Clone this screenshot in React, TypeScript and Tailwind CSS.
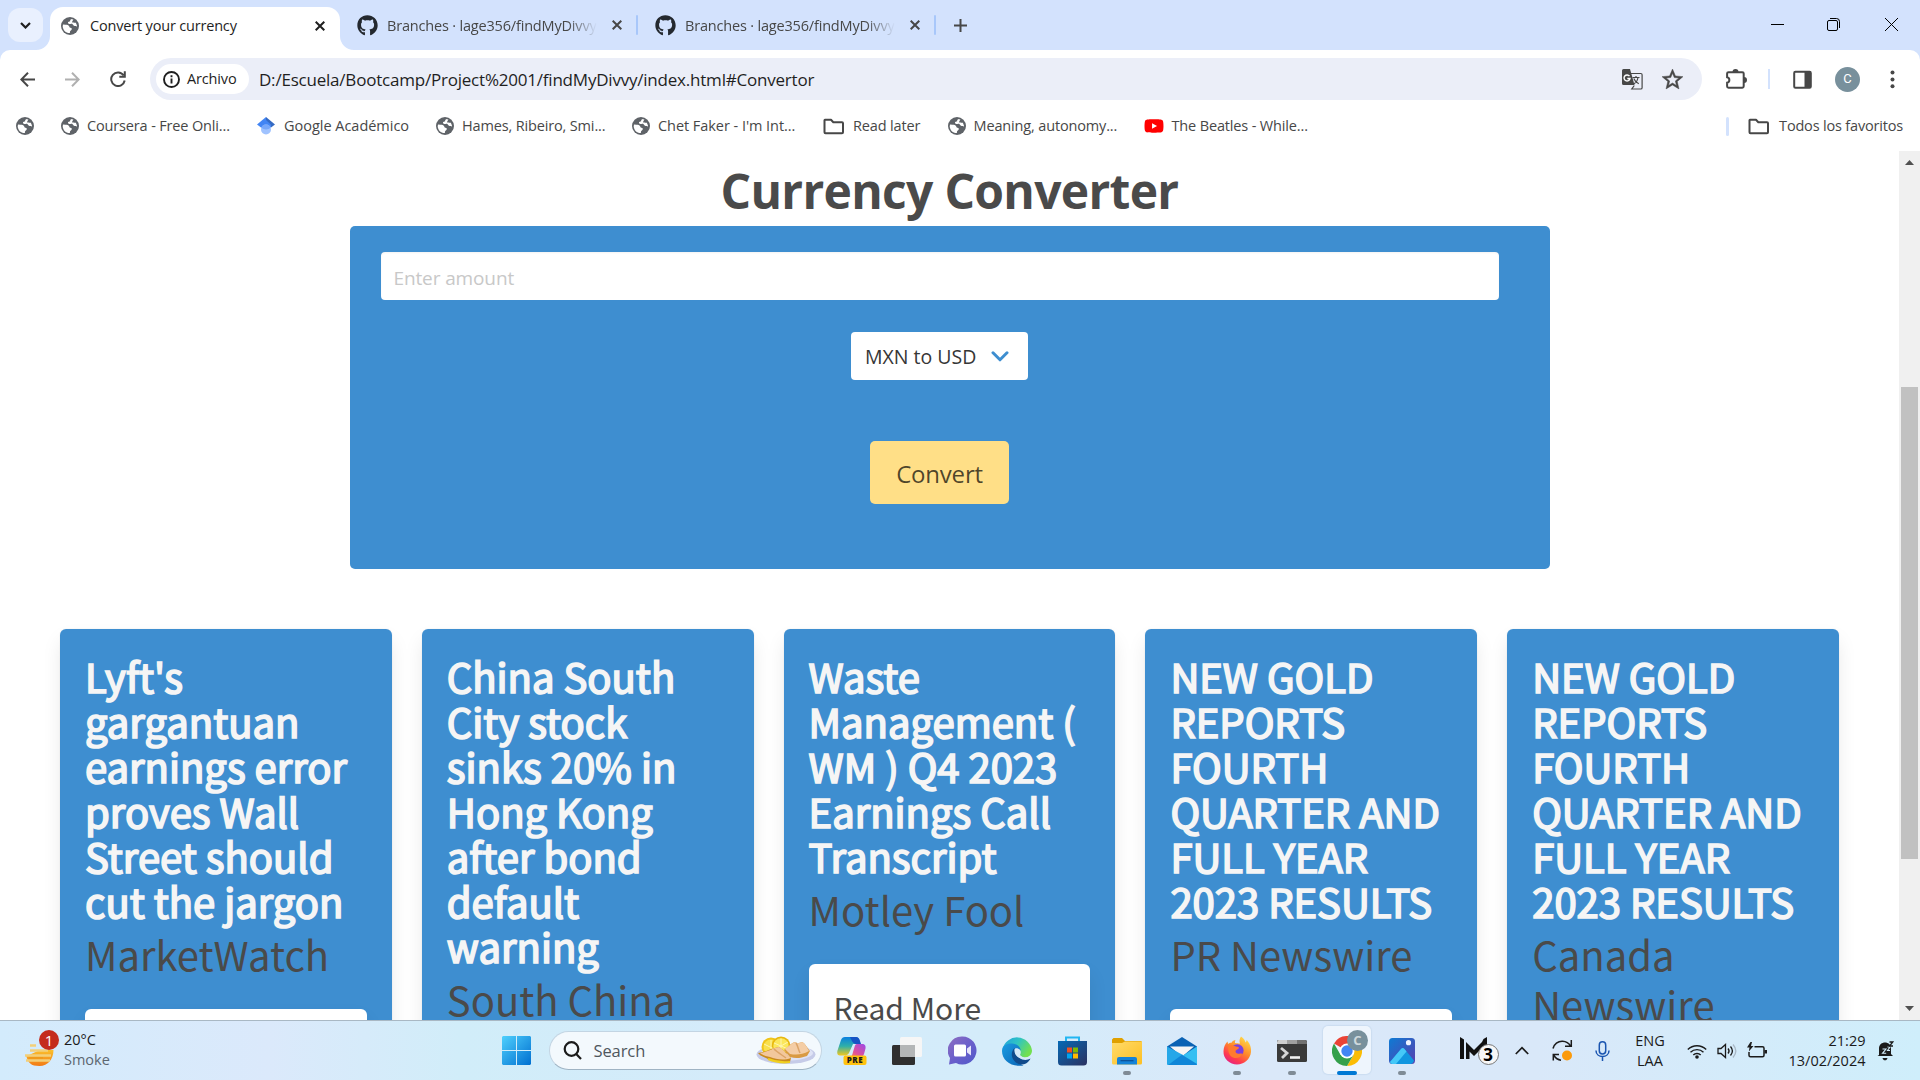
import React from 'react';
import { FaGithub, FaYoutube } from 'react-icons/fa';
import { MdStarOutline } from 'react-icons/md';

function Globe() {
  return (
    <svg className="size-[18px] shrink-0" viewBox="0 0 18 18">
      <circle cx="9" cy="9" r="9" fill="#5f6368" />
      <path
        d="M2 7.6 4.6 7.7c1.6.1 2.9.4 3.4 1.3.4.8.3 1.6 1.4 1.7 1.200 .2 1.600.8 1.300 1.700-.3.900-1.500 1-1.700 2.200l-.1 1.500C5 16.300 2 13.400 1.700 9.500z"
        fill="#fff"
      />
      <path
        d="M11.200 2c-1.700.3-2.200 1-2 1.700.2.700-1.400.700-2 1.400-.6.800.1 1.800 1.200 1.800 1.300 0 1.700-.4 2.600-.2 1.100.3.900 1.600 2 2 .9.400 1.700-.1 2.400.500l.6.600C16.200 6.200 14.200 3 11.200 2z"
        fill="#fff"
      />
      <path d="M11.500 2.200c.8 1 .2 1.900-.3 2.300-.5.500.1 1.200 1 1 1-.2 1.600.6 2.800.2l1.200 2.800.6-1.500-2.300-4z" fill="#5f6368" />
    </svg>
  );
}

function Folder() {
  return (
    <svg className="h-[17px] w-[22px] shrink-0" viewBox="0 0 22 17" fill="none" stroke="#474747" strokeWidth="2" strokeLinejoin="round">
      <path d="M2 1.800h6l2.300 2.400h8.700c.6 0 1 .4 1 1v9c0 .6-.4 1-1 1H2.500c-.6 0-1-.4-1-1V2.300z" />
    </svg>
  );
}

function Scholar() {
  return (
    <svg className="size-[18px] shrink-0" viewBox="0 0 18 18">
      <path d="M9 0 0 7.500l4 3.100L9 6z" fill="#4285f4" />
      <path d="m9 0 9 7.500-4 3.100L9 6z" fill="#356ac3" />
      <path d="M4 7.800 9 3l5 4.800v2L9 14l-5-4z" fill="#4285f4" />
      <circle cx="9" cy="12.500" r="5" fill="#a0c3ff" />
      <path d="M4.300 10.800a5 5 0 0 1 9.400 0A7 7 0 0 1 9 12.600a7 7 0 0 1-4.700-1.800z" fill="#76a7fa" />
    </svg>
  );
}

function Cross({ color }: { color: string }) {
  return (
    <svg className="size-[10px] shrink-0" viewBox="0 0 10 10" stroke={color} strokeWidth="2">
      <path d="m.7.7 8.600 8.600M9.300.7.7 9.300" />
    </svg>
  );
}

function BranchTab() {
  return (
    <div className="flex h-full w-[298px] items-center">
      <FaGithub className="ml-[17px] size-[21px] shrink-0 text-[#24292f]" />
      <span className="mt-px ml-[9px] w-[210px] overflow-hidden whitespace-nowrap text-[#474747] [mask-image:linear-gradient(to_right,black_86%,transparent)]">
        Branches · lage356/findMyDivvy
      </span>
      <span className="ml-[15px] flex">
        <Cross color="#474747" />
      </span>
      <span className="ml-auto h-5 w-[2px] rounded-full bg-[#a8c7fa]" />
    </div>
  );
}

function TabStrip() {
  return (
    <div className="flex h-[50px] shrink-0 items-stretch bg-[#d3e2fd] text-[14.5px] tracking-[-0.18px]">
      <div className="mt-2 ml-2 flex h-[34px] w-[35px] items-center justify-center rounded-[12px] bg-[#e9f0fe]">
        <svg className="h-[7px] w-[11px]" viewBox="0 0 11 7" fill="none" stroke="#1f1f1f" strokeWidth="2.200">
          <path d="m1 1 4.500 4.500L10 1" />
        </svg>
      </div>
      <div className="relative mt-[7px] ml-[7px] flex h-[43px] w-[290px] items-center rounded-t-[13px] bg-white pb-[6px] text-[#1f1f1f]">
        <svg className="absolute bottom-0 -left-[14px] size-[14px]" viewBox="0 0 14 14">
          <path d="M14 0v14H0A14 14 0 0 0 14 0z" fill="#fff" />
        </svg>
        <svg className="absolute -right-[14px] bottom-0 size-[14px]" viewBox="0 0 14 14">
          <path d="M0 0v14h14A14 14 0 0 1 0 0z" fill="#fff" />
        </svg>
        <span className="ml-[11px] flex">
          <Globe />
        </span>
        <span className="mt-px ml-[11px] w-[225px]">Convert your currency</span>
        <Cross color="#1f1f1f" />
      </div>
      <BranchTab />
      <BranchTab />
      <svg className="mt-[19px] ml-[18px] size-[13px]" viewBox="0 0 13 13" stroke="#474747" strokeWidth="2">
        <path d="M6.500 0v13M0 6.500h13" />
      </svg>
      <div className="ml-auto flex h-[49px] items-center text-black">
        <svg className="mr-[43px] h-[13px] w-[13px]" viewBox="0 0 13 13" stroke="#000" strokeWidth="1">
          <path d="M0 6.500h13" />
        </svg>
        <svg className="mr-[45px] size-[13px]" viewBox="0 0 13 13" fill="none" stroke="#000" strokeWidth="1">
          <rect x=".5" y="2.500" width="10" height="10" rx="1.500" />
          <path d="M3 .5h6.500a3 3 0 0 1 3 3V10" />
        </svg>
        <svg className="mr-[22px] size-[13px]" viewBox="0 0 13 13" stroke="#000" strokeWidth="1">
          <path d="m0 0 13 13M13 0 0 13" />
        </svg>
      </div>
    </div>
  );
}

function Toolbar() {
  return (
    <div className="flex h-[58px] shrink-0 items-center bg-[#d3e2fd]">
      <div className="flex h-full w-full items-center rounded-t-[10px] bg-white">
        <svg className="ml-[20px] size-[15px]" viewBox="0 0 15 15" fill="none" stroke="#474747" strokeWidth="2">
          <path d="M15 7.500H1.500M8 .8 1.300 7.500 8 14.200" />
        </svg>
        <svg className="ml-[30px] size-[15px]" viewBox="0 0 15 15" fill="none" stroke="#b0b0b0" strokeWidth="2">
          <path d="M0 7.500h13.500M7 .8l6.700 6.700L7 14.200" />
        </svg>
        <svg className="ml-[29.500px] size-[16px]" viewBox="0 0 16 16" fill="none" stroke="#474747" strokeWidth="2">
          <path d="M13.600 4.300A6.800 6.800 0 1 0 14.700 9.500M14.800.3v5.500H9.300" />
        </svg>
        <div className="ml-[24.500px] flex h-[42px] w-[1552px] items-center rounded-full bg-[#ebeef8]">
          <div className="ml-[6px] flex h-[30px] w-[93px] items-center rounded-full bg-white">
            <svg className="ml-[7px] size-[17px]" viewBox="0 0 17 17" fill="none" stroke="#1f1f1f" strokeWidth="1.900">
              <circle cx="8.500" cy="8.500" r="7.500" />
              <path d="M8.500 7.500v5M8.500 4.300v1.900" />
            </svg>
            <span className="ml-[7px] text-[14.5px] font-medium tracking-[-0.15px] text-[#1f1f1f]">Archivo</span>
          </div>
          <span className="mt-px ml-[10px] text-[17px] tracking-[-0.21px] text-[#1f1f1f]">
            D:/Escuela/Bootcamp/Project%2001/findMyDivvy/index.html#Convertor
          </span>
          <svg className="ml-auto size-[21px]" viewBox="0 0 21 21">
            <path d="M1.500 0H8l4.500 16H1.500A1.500 1.500 0 0 1 0 14.500v-13A1.500 1.500 0 0 1 1.500 0z" fill="#474747" />
            <path d="M8.800 4.500h10a1.300 1.300 0 0 1 1.300 1.300v12.900a1.300 1.300 0 0 1-1.300 1.300H9.800l2.500-3.500" fill="none" stroke="#474747" strokeWidth="1.200" />
            <path d="M7.500 7.200A3 3 0 1 0 8 9.500H5.300" fill="none" stroke="#fff" strokeWidth="1.400" />
            <path d="M10.500 8.500h7M14 7v1.500M16 8.500c-.5 3-2.500 5.500-4.500 6.500M11.800 9.500c1 2.500 3 4.500 5 5.300" fill="none" stroke="#474747" strokeWidth="1.200" />
          </svg>
          <MdStarOutline className="mr-[17px] ml-[17px] size-[25px] stroke-[#474747] [stroke-width:0.5] text-[#474747]" />
        </div>
        <svg className="ml-[24px] size-[21px] shrink-0" viewBox="0 0 21 21">
          <path
            d="M2.500 3.200h13.800c.8 0 1.400.6 1.400 1.400v12.700c0 .8-.6 1.400-1.400 1.400H2.500c-.8 0-1.400-.6-1.400-1.400v-3.600c3-.5 3-5 0-5.500V4.600c0-.8.6-1.400 1.400-1.400z"
            fill="none"
            stroke="#474747"
            strokeWidth="2"
          />
          <path d="M6.500 3a3 3 0 0 1 6 0zM18 8a3 3 0 0 1 0 6z" fill="#474747" />
        </svg>
        <span className="ml-[21px] h-5 w-[2px] shrink-0 bg-[#d3e2fd]" />
        <svg className="ml-[23px] size-[19px] shrink-0" viewBox="0 0 19 19">
          <rect x="1.200" y="1.700" width="16.600" height="16" rx="1.200" fill="none" stroke="#474747" strokeWidth="2" />
          <path d="M11.500 1.500H18v16.500h-6.500z" fill="#474747" />
        </svg>
        <span className="ml-[23px] flex size-[25px] shrink-0 items-center justify-center rounded-full bg-[#78909c] font-['Roboto',sans-serif] text-[13px] text-white">
          C
        </span>
        <svg className="ml-[30px] h-[19px] w-[5px] shrink-0" viewBox="0 0 5 19" fill="#474747">
          <circle cx="2.500" cy="2.500" r="2" />
          <circle cx="2.500" cy="9.500" r="2" />
          <circle cx="2.500" cy="16.300" r="2" />
        </svg>
      </div>
    </div>
  );
}

function Bookmarks() {
  return (
    <div className="flex h-[43px] shrink-0 items-center bg-white pb-[7px] pl-4 text-[14.5px] tracking-[-0.15px] whitespace-nowrap text-[#474747]">
      <div className="w-[45px]">
        <Globe />
      </div>
      <div className="flex w-[196px] items-center gap-[8px]">
        <Globe />
        Coursera - Free Onli...
      </div>
      <div className="flex w-[179px] items-center gap-[9px] tracking-[-0.02px]">
        <Scholar />
        Google Académico
      </div>
      <div className="flex w-[196px] items-center gap-[8px]">
        <Globe />
        Hames, Ribeiro, Smi...
      </div>
      <div className="flex w-[191px] items-center gap-[8px] tracking-[-0.05px]">
        <Globe />
        Chet Faker - I'm Int...
      </div>
      <div className="flex w-[124.500px] items-center gap-[8px]">
        <Folder />
        Read later
      </div>
      <div className="flex w-[196px] items-center gap-[8px]">
        <Globe />
        Meaning, autonomy...
      </div>
      <div className="flex items-center gap-[8px]">
        <span className="relative flex">
          <span className="absolute inset-[6px] bg-white" />
          <FaYoutube className="relative size-[20px] text-[#f00]" />
        </span>
        The Beatles - While...
      </div>
      <span className="ml-auto h-[19px] w-[3px] rounded-full bg-[#d3e2fd]" />
      <div className="mr-[17px] ml-[19px] flex items-center gap-[9px] tracking-[-0.18px]">
        <Folder />
        Todos los favoritos
      </div>
    </div>
  );
}

type Article = { title: string; source: string };

const articles: Article[] = [
  { title: "Lyft's gargantuan earnings error proves Wall Street should cut the jargon", source: 'MarketWatch' },
  { title: 'China South City stock sinks 20% in Hong Kong after bond default warning', source: 'South China' },
  { title: 'Waste Management ( WM ) Q4 2023 Earnings Call Transcript', source: 'Motley Fool' },
  { title: 'NEW GOLD REPORTS FOURTH QUARTER AND FULL YEAR 2023 RESULTS', source: 'PR Newswire' },
  { title: 'NEW GOLD REPORTS FOURTH QUARTER AND FULL YEAR 2023 RESULTS', source: 'Canada Newswire' },
];

function Card({ title, source }: Article) {
  return (
    <article className="rounded-[6px] bg-[#3e8ed0] p-[25px] font-['Noto_Sans_CJK_SC',sans-serif] shadow-[0_10px_20px_-2.5px_rgba(10,10,10,0.1),0_0_0_1px_rgba(10,10,10,0.02)]">
      <h2 className="text-[40px] leading-[45px] text-[#f5f5f5] [-webkit-text-stroke:1.7px_#f5f5f5]">{title}</h2>
      <p className="mt-[5px] text-[40px] leading-[50px] text-[#4a4a4a]">{source}</p>
      <div className="mt-[30px] rounded-[6px] bg-white p-[25px] text-[30px] leading-[36px] text-[#4a4a4a] shadow-[0_10px_20px_-2.5px_rgba(10,10,10,0.1)]">
        Read More
      </div>
    </article>
  );
}

function Page() {
  return (
    <div className="flex min-h-0 flex-1">
      <main className="min-w-0 flex-1 overflow-hidden bg-white">
        <h1 className="mt-[10px] mb-[5px] text-center text-[48px] leading-[60px] font-bold tracking-[-0.7px] text-[#4a4a4a]">
          Currency Converter
        </h1>
        <section className="ml-[350px] flex h-[343px] w-[1200px] flex-col items-center rounded-[5px] bg-[#3e8ed0] pt-[26px] pr-[52px] pl-[31px]">
          <div className="flex h-12 w-[1118px] items-center rounded-[4px] bg-white pt-[4px] pl-[13px] text-[19px] tracking-[-0.12px] text-[#c8c8c8] shadow-[inset_0_1px_2px_rgba(10,10,10,0.05)]">
            Enter amount
          </div>
          <div className="mt-8 flex h-12 w-[177px] items-center rounded-[4px] bg-white pt-[2px] pl-[14px] text-[19.5px] text-[#363636]">
            MXN to USD
            <svg className="-mt-[2px] ml-[15px] h-[11px] w-[18px]" viewBox="0 0 18 11" fill="none" stroke="#3e8ed0" strokeWidth="3" strokeLinecap="round" strokeLinejoin="round">
              <path d="m2 1.800 7 7 7-7" />
            </svg>
          </div>
          <div className="mt-[61px] flex h-[63px] w-[139px] items-center justify-center rounded-[5px] bg-[#ffdf87] pt-[2px] text-[24px] tracking-[-0.2px] text-black/70">
            Convert
          </div>
        </section>
        <section className="mt-[60px] ml-[60px] grid w-[1779px] grid-cols-5 gap-[30px]">
          {articles.map((a) => (
            <Card key={a.source} {...a} />
          ))}
        </section>
      </main>
      <div className="flex w-[21px] shrink-0 flex-col items-center bg-[#f0f0f0]">
        <svg className="mt-[9px] h-[5px] w-[9px]" viewBox="0 0 9 5" fill="#505050">
          <path d="M4.500 0 9 5H0z" />
        </svg>
        <div className="mt-[222px] h-[472px] w-[17px] bg-[#c1c1c1]" />
        <svg className="mt-auto mb-[9px] h-[5px] w-[9px]" viewBox="0 0 9 5" fill="#505050">
          <path d="M4.500 5 9 0H0z" />
        </svg>
      </div>
    </div>
  );
}

function AppCell({ children, running, active }: { children: React.ReactNode; running?: boolean; active?: boolean }) {
  return (
    <div className="relative flex h-[59px] w-[55px] shrink-0 items-center justify-center">
      {active && <span className="absolute top-[5px] left-[3.500px] size-12 rounded-[5px] bg-[#eef5fd] shadow-[0_0_1px_1px_rgba(150,180,210,0.2)]" />}
      <span className="relative flex">{children}</span>
      {running && <span className="absolute bottom-[5px] left-[23.500px] h-[4px] w-[8px] rounded-full bg-[#7f8b96]" />}
      {active && <span className="absolute bottom-[5px] left-[17.500px] h-[4px] w-[20px] rounded-full bg-[#0078d4]" />}
    </div>
  );
}

function WindowsLogo() {
  return (
    <svg className="size-[29px]" viewBox="0 0 29 29">
      <defs>
        <linearGradient id="win" x1="0" y1="0" x2="1" y2="1">
          <stop offset="0" stopColor="#4fd0fd" />
          <stop offset="1" stopColor="#006fd0" />
        </linearGradient>
      </defs>
      <path d="M1 0h13v14H0V1zM15 0h13l1 1v13H15zM0 15h14v14H1l-1-1zM15 15h14v13l-1 1H15z" fill="url(#win)" />
    </svg>
  );
}

function FoodPlate() {
  return (
    <svg className="h-[30px] w-[60px]" viewBox="0 0 60 30">
      <ellipse cx="30" cy="18.500" rx="29.500" ry="9.500" fill="#c6cbe8" />
      <ellipse cx="31" cy="17" rx="26" ry="7.500" fill="#dfe3f5" />
      <circle cx="15" cy="11" r="9.500" fill="#f0c419" />
      <circle cx="15" cy="11" r="7.500" fill="#f9e04b" />
      <circle cx="25" cy="10" r="9.500" fill="#e8b810" />
      <circle cx="25" cy="10" r="7.700" fill="#fbe75c" />
      <path d="M25 2.500v15M18 7l14 6M32 6l-14 8M15 4v12M8 8l12 6" stroke="#fff6b8" strokeWidth=".9" />
      <path d="M2 17c8-1 14-5 21-6 5 3 8 8 12 11l-1 4c-8 2-16-1-22-3-4-2-8-3-10-6z" fill="#c98a1e" />
      <path d="M4 17c8-1 13-5 19-6 5 3 8 8 12 11-8 3-15 1-21-1-4-1-8-2-10-4z" fill="#f2c79c" />
      <path d="M28 14c4-3 7-7 11-8 3 2 4 1 7 0 4 2 5 6 8 9l-3 5c-6 2-11 3-17 1z" fill="#d99a42" />
      <path d="M29 13c4-3 7-6 10-7 3 2 4 1 7 0 4 2 5 6 7 9-7 4-13 4-19 3z" fill="#f4cda5" />
      <path d="M40 7c2 3 2 6 4 10M18 13c3 3 8 6 12 9" stroke="#dca468" strokeWidth="1.500" fill="none" />
      <path d="M12 23c7 3 14 4 22 3" stroke="#f0d020" strokeWidth="2.200" fill="none" />
    </svg>
  );
}

function Copilot() {
  return (
    <svg className="h-[29px] w-[30px]" viewBox="0 0 30 29">
      <defs>
        <linearGradient id="cp1" x1="0" y1="0" x2="0" y2="1">
          <stop offset="0" stopColor="#0a7fe0" />
          <stop offset=".5" stopColor="#2fb0a8" />
          <stop offset="1" stopColor="#f5c81c" />
        </linearGradient>
        <linearGradient id="cp2" x1="1" y1="0" x2="0" y2="1">
          <stop offset="0" stopColor="#9a4be8" />
          <stop offset=".6" stopColor="#e0509a" />
          <stop offset="1" stopColor="#fb8a4b" />
        </linearGradient>
      </defs>
      <path d="M8 1h10c3 0 4 2 4.500 4l1 3H16l-4 9c-1 2-3 2.500-5 2.500H3c-3 0-3-3-2.500-5L4 4c.8-2 2-3 4-3z" fill="url(#cp1)" />
      <path d="M13 1h6c2.500 0 3.500 2 4 4l1 3h-5c-3 0-4-3-6-7z" fill="#1553c4" />
      <path d="M20 8h5c3 0 4 2 3.500 4.500L27 18c-1 3-3 4-5 4H12c3-1 3.500-4 4-6l1.500-5c.5-2 1-3 2.500-3z" fill="url(#cp2)" />
      <rect x="6.500" y="19.500" width="23" height="9.500" rx="2" fill="#ffc20e" />
      <text x="18" y="27.300" textAnchor="middle" fontFamily="Open Sans" fontWeight="800" fontSize="8" letterSpacing=".5" fill="#1a1a1a">
        PRE
      </text>
    </svg>
  );
}

function TaskView() {
  return (
    <svg className="size-[30px]" viewBox="0 0 30 30">
      <rect x="0" y="9" width="23" height="20" rx="1.500" fill="#2f2f2f" />
      <rect x="8" y="1" width="22" height="20" rx="1.500" fill="#f6f6f6" />
      <path d="M8 9h15v12H9.500L8 19.500z" fill="#b4b6b7" />
    </svg>
  );
}

function Chat() {
  return (
    <svg className="size-[29px]" viewBox="0 0 29 29">
      <defs>
        <linearGradient id="chat" x1="0" y1="0" x2="1" y2="1">
          <stop offset="0" stopColor="#8f6fc0" />
          <stop offset=".5" stopColor="#6b5fcb" />
          <stop offset="1" stopColor="#5059c9" />
        </linearGradient>
      </defs>
      <path d="M14.500.5a14 14 0 1 1-6.500 26.400L1 28.500l1-6.500A14 14 0 0 1 14.500.5z" fill="url(#chat)" />
      <rect x="6" y="8.500" width="12" height="12" rx="1.500" fill="#fff" />
      <path d="M19 12.500 23 9.500v10l-4-3z" fill="#e6e4fa" />
    </svg>
  );
}

function Edge() {
  return (
    <svg className="size-[30px]" viewBox="0 0 30 30">
      <defs>
        <linearGradient id="edgeTop" x1="0" y1="0" x2="1" y2=".5">
          <stop offset="0" stopColor="#1f9fe0" />
          <stop offset=".5" stopColor="#2fc4c4" />
          <stop offset="1" stopColor="#72e04f" />
        </linearGradient>
        <linearGradient id="edgeLow" x1="0" y1="0" x2="1" y2="1">
          <stop offset="0" stopColor="#1b9de2" />
          <stop offset="1" stopColor="#0a63b4" />
        </linearGradient>
      </defs>
      <path d="M.5 13A15 15 0 0 1 30 14.500c0 4-3 7-7.500 7-3.500 0-5.500-1.500-5-3.500 1-1.500 1-3.500 0-5-3-4-12-5-17 0z" fill="url(#edgeTop)" />
      <path d="M0 15C0 9 6 7 10 7.500c6 .5 9 4 8.500 7-2-2-5-1.500-6 1-2 5 2 11 9 14C10 31.500 0 25 0 15z" fill="url(#edgeLow)" />
      <path d="M12.500 12c-3 3-4 8-.5 12.500 3 4 8 5 12 3 2-1.200 3.600-3 4.500-5-3 2-8 2-11-.5-3-2.500-5-5-5-10z" fill="#114a8b" />
      <path d="M12.500 13.500c-.5 4 2 8.500 8 9.300 3 .3 6-.3 8-1.300.6-.5.300-.9-.5-.6-4 1.300-8 .4-10-2 1-1.500 1-3.500 0-5-1.500-1.700-5-2.400-5.500-.4z" fill="#d5e8f7" />
    </svg>
  );
}

function Store() {
  return (
    <svg className="h-[30px] w-[29px]" viewBox="0 0 29 30">
      <defs>
        <linearGradient id="store" x1="0" y1="0" x2="1" y2="1">
          <stop offset="0" stopColor="#0669b5" />
          <stop offset="1" stopColor="#2b3160" />
        </linearGradient>
      </defs>
      <path d="M8 6V1.500h13V6" fill="none" stroke="#22b6f2" strokeWidth="2" />
      <path d="M0 5h29v21a3.500 3.500 0 0 1-3.500 3.500h-22A3.500 3.500 0 0 1 0 26z" fill="url(#store)" />
      <path d="M9 11.500h5v5H9z" fill="#f25022" />
      <path d="M15 11.500h5v5h-5z" fill="#7fba00" />
      <path d="M9 17.500h5v5H9z" fill="#00a4ef" />
      <path d="M15 17.500h5v5h-5z" fill="#ffb900" />
    </svg>
  );
}

function Explorer() {
  return (
    <svg className="h-[28px] w-[30px]" viewBox="0 0 30 28">
      <defs>
        <linearGradient id="fold" x1="0" y1="0" x2="1" y2="1">
          <stop offset="0" stopColor="#ffdb6b" />
          <stop offset="1" stopColor="#fdbf22" />
        </linearGradient>
      </defs>
      <path d="M1.500 1H10l3 3h16l1 1v5H0V2.500z" fill="#e0a000" />
      <path d="M0 6h10l3-1.500h17V26a1.500 1.500 0 0 1-1.500 1.500h-27A1.500 1.500 0 0 1 0 26z" fill="url(#fold)" />
      <path d="M5 27.500V22a2 2 0 0 1 2-2h16a2 2 0 0 1 2 2v5.500z" fill="#1583d8" />
      <path d="M8.500 23.700h13" stroke="#0c4f93" strokeWidth="1.200" />
    </svg>
  );
}

function Mail() {
  return (
    <svg className="h-[28px] w-[30px]" viewBox="0 0 30 28">
      <path d="M0 9.500 15 0l15 9.500V18H0z" fill="#0a62b4" />
      <path d="M3 9.500h24L17 18h-4z" fill="#f5f5f5" />
      <path d="M0 9.500 16 18l-9 10H1a1 1 0 0 1-1-1z" fill="#25a7e8" />
      <path d="M30 9.500v17.500a1 1 0 0 1-1 1H1z" fill="#35bff2" />
      <path d="M15 17.800 30 27c0 .6-.5 1-1 1H1z" fill="#0f86d8" />
    </svg>
  );
}

function Firefox() {
  return (
    <svg className="size-[29px]" viewBox="0 0 29 29">
      <defs>
        <linearGradient id="ff" x1=".8" y1="0" x2=".2" y2="1">
          <stop offset="0" stopColor="#ffe14a" />
          <stop offset=".45" stopColor="#ff8a2a" />
          <stop offset=".75" stopColor="#ff3b4e" />
          <stop offset="1" stopColor="#e01e8c" />
        </linearGradient>
      </defs>
      <path d="M18 .5c3 2 4 4 4.500 6 .8-.8 1.200-1.700 1.200-2.500C26.500 7 28.500 11 28 16c-.8 7.500-7 12.500-14 12.500S0 23 .500 15C.7 11 2 8 4.500 5.500L5 8c1-.8 2-1.300 3.500-1.300C9.500 5 11 4 12.500 4c-.5 1-.7 2-.5 3 2 .3 3.500.3 5 .5-1-2-.5-5 1-7z" fill="url(#ff)" />
      <circle cx="14.300" cy="14.500" r="6.300" fill="#7a3fe0" />
      <path d="M5.500 10c2-1.500 6-.5 8 .8 1.500 0 2.500.4 2.500 1.200-1 1.600-3 1.600-3.500 3-.3 2 2 3.300 4.500 2.600 1.500-.4 2.500-.2 2.500.4-1.500 3.500-6 5-9.500 3.500C6 20 4.500 14 5.500 10z" fill="#ff7a2f" />
    </svg>
  );
}

function Terminal() {
  return (
    <svg className="h-[22px] w-[30px]" viewBox="0 0 30 22">
      <rect width="30" height="22" rx="1.500" fill="#3a3a3a" />
      <path d="M1.500 0H10v4H0V1.500z" fill="#cfcfcf" />
      <path d="M10 0h10v4H10z" fill="#a0a0a0" />
      <path d="M20 0h8.500L30 1.500V4H20z" fill="#717171" />
      <path d="m4 8 6 5-5 5" fill="none" stroke="#d6d6d6" strokeWidth="2.800" />
      <path d="M13 17.500h10" stroke="#f2f2f2" strokeWidth="2.600" />
    </svg>
  );
}

function Chrome() {
  return (
    <span className="relative flex">
      <svg className="size-[30px]" viewBox="0 0 30 30">
        <path d="M15 15 2 7.500A15 15 0 0 1 28 7.500z" fill="#ea4335" />
        <path d="M15 7.500h13A15 15 0 0 1 15 30l6.500-11z" fill="#fbbc05" />
        <path d="M2 7.500A15 15 0 0 0 15 30l6.500-11.200L15 15l-6.500 3.800z" fill="#34a04b" />
        <circle cx="15" cy="15" r="7.500" fill="#fff" />
        <circle cx="15" cy="15" r="5.700" fill="#4285f4" />
      </svg>
      <span className="absolute -top-[6px] -right-[6px] flex size-[21px] items-center justify-center rounded-full bg-[#78909c] text-[13px] font-bold text-[#cfd8dc]">
        C
      </span>
    </span>
  );
}

function Photos() {
  return (
    <svg className="size-[26px]" viewBox="0 0 26 26">
      <defs>
        <linearGradient id="ph" x1="0" y1="0" x2="1" y2="1">
          <stop offset="0" stopColor="#0d7bd4" />
          <stop offset="1" stopColor="#5a3fae" />
        </linearGradient>
      </defs>
      <rect width="26" height="26" rx="3.500" fill="url(#ph)" />
      <path d="m1 24 11-13c1-1.300 2.500-1.300 3.500 0L25 22.500c-.5 2-2 3.500-3.500 3.500h-18C2.500 26 1.500 25 1 24z" fill="#1196e0" />
      <path d="m1 24 11-13c1-1.300 2.500-1.300 3.500 0l2 2.500L7 26H3.500C2.500 26 1.500 25 1 24z" fill="#45c8f8" />
      <circle cx="19.500" cy="4.700" r="2.600" fill="#eef4ff" />
    </svg>
  );
}

function Weather() {
  return (
    <div className="relative ml-[25px] h-[38px] w-[39px]">
      <svg className="absolute top-[11px] left-0 h-[24px] w-[30px]" viewBox="0 0 30 24">
        <defs>
          <linearGradient id="sun" x1="0" y1="0" x2="0" y2="1">
            <stop offset="0" stopColor="#fbc02d" />
            <stop offset="1" stopColor="#f27a14" />
          </linearGradient>
        </defs>
        <path d="M1 12h3l11-5h13.500c0 9-5.500 16-14 16S3 20 1 12z" fill="url(#sun)" />
        <path d="M5 2.500h6M5 7.500h18M0 12.500h26M1 17.500h24" stroke="#f2cf7a" strokeWidth="2.400" />
        <path d="M4 15h14" stroke="#f09a1a" strokeWidth="2" />
      </svg>
      <span className="absolute -top-[2px] left-[14px] flex size-[20px] items-center justify-center rounded-full bg-[#c42b1c] text-[15px] text-white">1</span>
    </div>
  );
}

function Taskbar() {
  return (
    <footer className="flex h-[60px] shrink-0 items-center border-t border-[#a9b8c4] bg-[linear-gradient(90deg,#d3ebfc_0%,#dbe9fb_14%,#d1edf9_24%,#d4ebfa_38%,#d4ecfa_52%,#dae8f9_66%,#d9e8f9_80%,#cfeefb_100%)] text-[14.5px] leading-[20px] text-[#1b1b1b]">
      <div className="flex w-[489px] items-center">
        <Weather />
        <div className="-mt-px">
          <p>20°C</p>
          <p className="text-[#5c6670]">Smoke</p>
        </div>
      </div>
      <AppCell>
        <WindowsLogo />
      </AppCell>
      <div className="mr-[3px] ml-[4.500px] flex h-[39px] w-[273px] items-center rounded-full border border-[#c3d5e3] border-b-[#9fb4c4] bg-[#f3f9fd] pr-[5px] pl-[13px]">
        <svg className="size-[19px]" viewBox="0 0 19 19" fill="none" stroke="#1b1b1b" strokeWidth="2.200">
          <circle cx="8.500" cy="8" r="6.800" />
          <path d="m13.200 13 4.800 4.900" />
        </svg>
        <span className="ml-[12px] text-[16.5px] tracking-[-0.1px] text-[#4f575e]">Search</span>
        <span className="ml-auto">
          <FoodPlate />
        </span>
      </div>
      <AppCell><Copilot /></AppCell>
      <AppCell><TaskView /></AppCell>
      <AppCell><Chat /></AppCell>
      <AppCell><Edge /></AppCell>
      <AppCell><Store /></AppCell>
      <AppCell running><Explorer /></AppCell>
      <AppCell><Mail /></AppCell>
      <AppCell running><Firefox /></AppCell>
      <AppCell running><Terminal /></AppCell>
      <AppCell active><Chrome /></AppCell>
      <AppCell running><Photos /></AppCell>
      <div className="relative ml-[30px] h-[30px] w-[40px]">
        <svg className="absolute top-px left-0 h-[22px] w-[28px]" viewBox="0 0 28 22" fill="#111">
          <path d="M0 0 4 2.500V22H0zM6 5l8 8 8-8 1.500-3L27 0v22h-4V10l-9 9-4.500-4.500V22H6z" />
        </svg>
        <span className="absolute top-[8px] left-[18px] flex size-[21px] items-center justify-center rounded-full border border-[#777] bg-[#f7f7f7] text-[17px] leading-none font-bold text-black">
          3
        </span>
      </div>
      <svg className="ml-[15.500px] h-[9px] w-[14px]" viewBox="0 0 14 9" fill="none" stroke="#1b1b1b" strokeWidth="1.700">
        <path d="m.8 8 6.200-6.300L13.200 8" />
      </svg>
      <svg className="ml-[22.500px] size-[21px]" viewBox="0 0 21 21" fill="none" stroke="#1b1b1b" strokeWidth="1.500">
        <path d="M1 8.500C2 4 6 1 10.500 1.200c3.500.1 6.500 2 8 4.800M19.300 0v6.300H13M1.300 20.500v-6H7M2 15.500c1.500 2.500 4 4.300 7 4.700" />
        <circle cx="15" cy="15.500" r="5" fill="#fb9a0c" stroke="none" />
      </svg>
      <svg className="ml-[22px] h-[20px] w-[15px]" viewBox="0 0 15 20" fill="none" stroke="#1a55b0" strokeWidth="1.500">
        <rect x="4.300" y=".8" width="6.400" height="12.200" rx="3.200" />
        <path d="M1 9.500c0 8 13 8 13 0M7.500 15.500V20" />
      </svg>
      <div className="ml-[20.500px] w-[40px] text-center">
        <p>ENG</p>
        <p>LAA</p>
      </div>
      <svg className="ml-[17px] h-[16px] w-[20px]" viewBox="0 0 20 16" fill="none" stroke="#1b1b1b" strokeWidth="1.400">
        <path d="M.8 6.500a13 13 0 0 1 18.400 0M3.500 9.300a9.200 9.200 0 0 1 13 0M6.300 12a5.200 5.200 0 0 1 7.400 0" />
        <circle cx="10" cy="14" r="1.800" fill="#1b1b1b" stroke="none" />
      </svg>
      <svg className="ml-[10px] h-[16px] w-[20px]" viewBox="0 0 20 16" fill="none" stroke="#1b1b1b" strokeWidth="1.300">
        <path d="M1 5.500h3l4.500-4v13l-4.500-4H1z" />
        <path d="M11 5.500c1.300 1.500 1.300 3.500 0 5M13.500 3.500c2.300 2.700 2.300 6.300 0 9" />
        <path d="M16 1.500c3.500 4 3.500 9 0 13" stroke="#a9b8c6" />
      </svg>
      <svg className="ml-[10px] h-[17px] w-[20px]" viewBox="0 0 20 17" fill="none" stroke="#1b1b1b" strokeWidth="1.500">
        <path d="M7.500 4.700h8c1 0 1.500.6 1.500 1.500v7c0 1-.5 1.500-1.500 1.500h-12c-1 0-1.500-.5-1.500-1.500V10" />
        <path d="M17.500 8H20v3.500h-2.500z" fill="#1b1b1b" stroke="none" />
        <path d="M3.500 0 0 5.500h2.500L1.800 9.500 6.500 4H4l1-4z" fill="#1b1b1b" stroke="none" />
      </svg>
      <div className="ml-auto text-right">
        <p>21:29</p>
        <p>13/02/2024</p>
      </div>
      <svg className="mr-[26px] ml-[11.500px] h-[20px] w-[17px]" viewBox="0 0 17 20">
        <path d="M2 14V7.500C2 3.500 5 1.500 8 1.500s6 2 6 6V13l2 2H.5z" fill="#1b1b1b" />
        <path d="M5.500 17h5c-.3 1.500-1.300 2.300-2.500 2.300S5.800 18.500 5.500 17z" fill="#1b1b1b" />
        <path d="M5.500 8h3.500l-3.500 4.300h3.700M10.500 6H13l-2.500 3.500H13" fill="none" stroke="#d3edfa" strokeWidth="1.100" />
        <path d="M12.500 1h3.300l-3.300 4h3.500" fill="none" stroke="#1b1b1b" strokeWidth="1.300" />
      </svg>
    </footer>
  );
}

export default function App() {
  return (
    <div className="flex h-[1080px] w-[1920px] flex-col overflow-hidden bg-white font-['Open_Sans','Noto_Sans',sans-serif]">
      <TabStrip />
      <Toolbar />
      <Bookmarks />
      <Page />
      <Taskbar />
    </div>
  );
}
